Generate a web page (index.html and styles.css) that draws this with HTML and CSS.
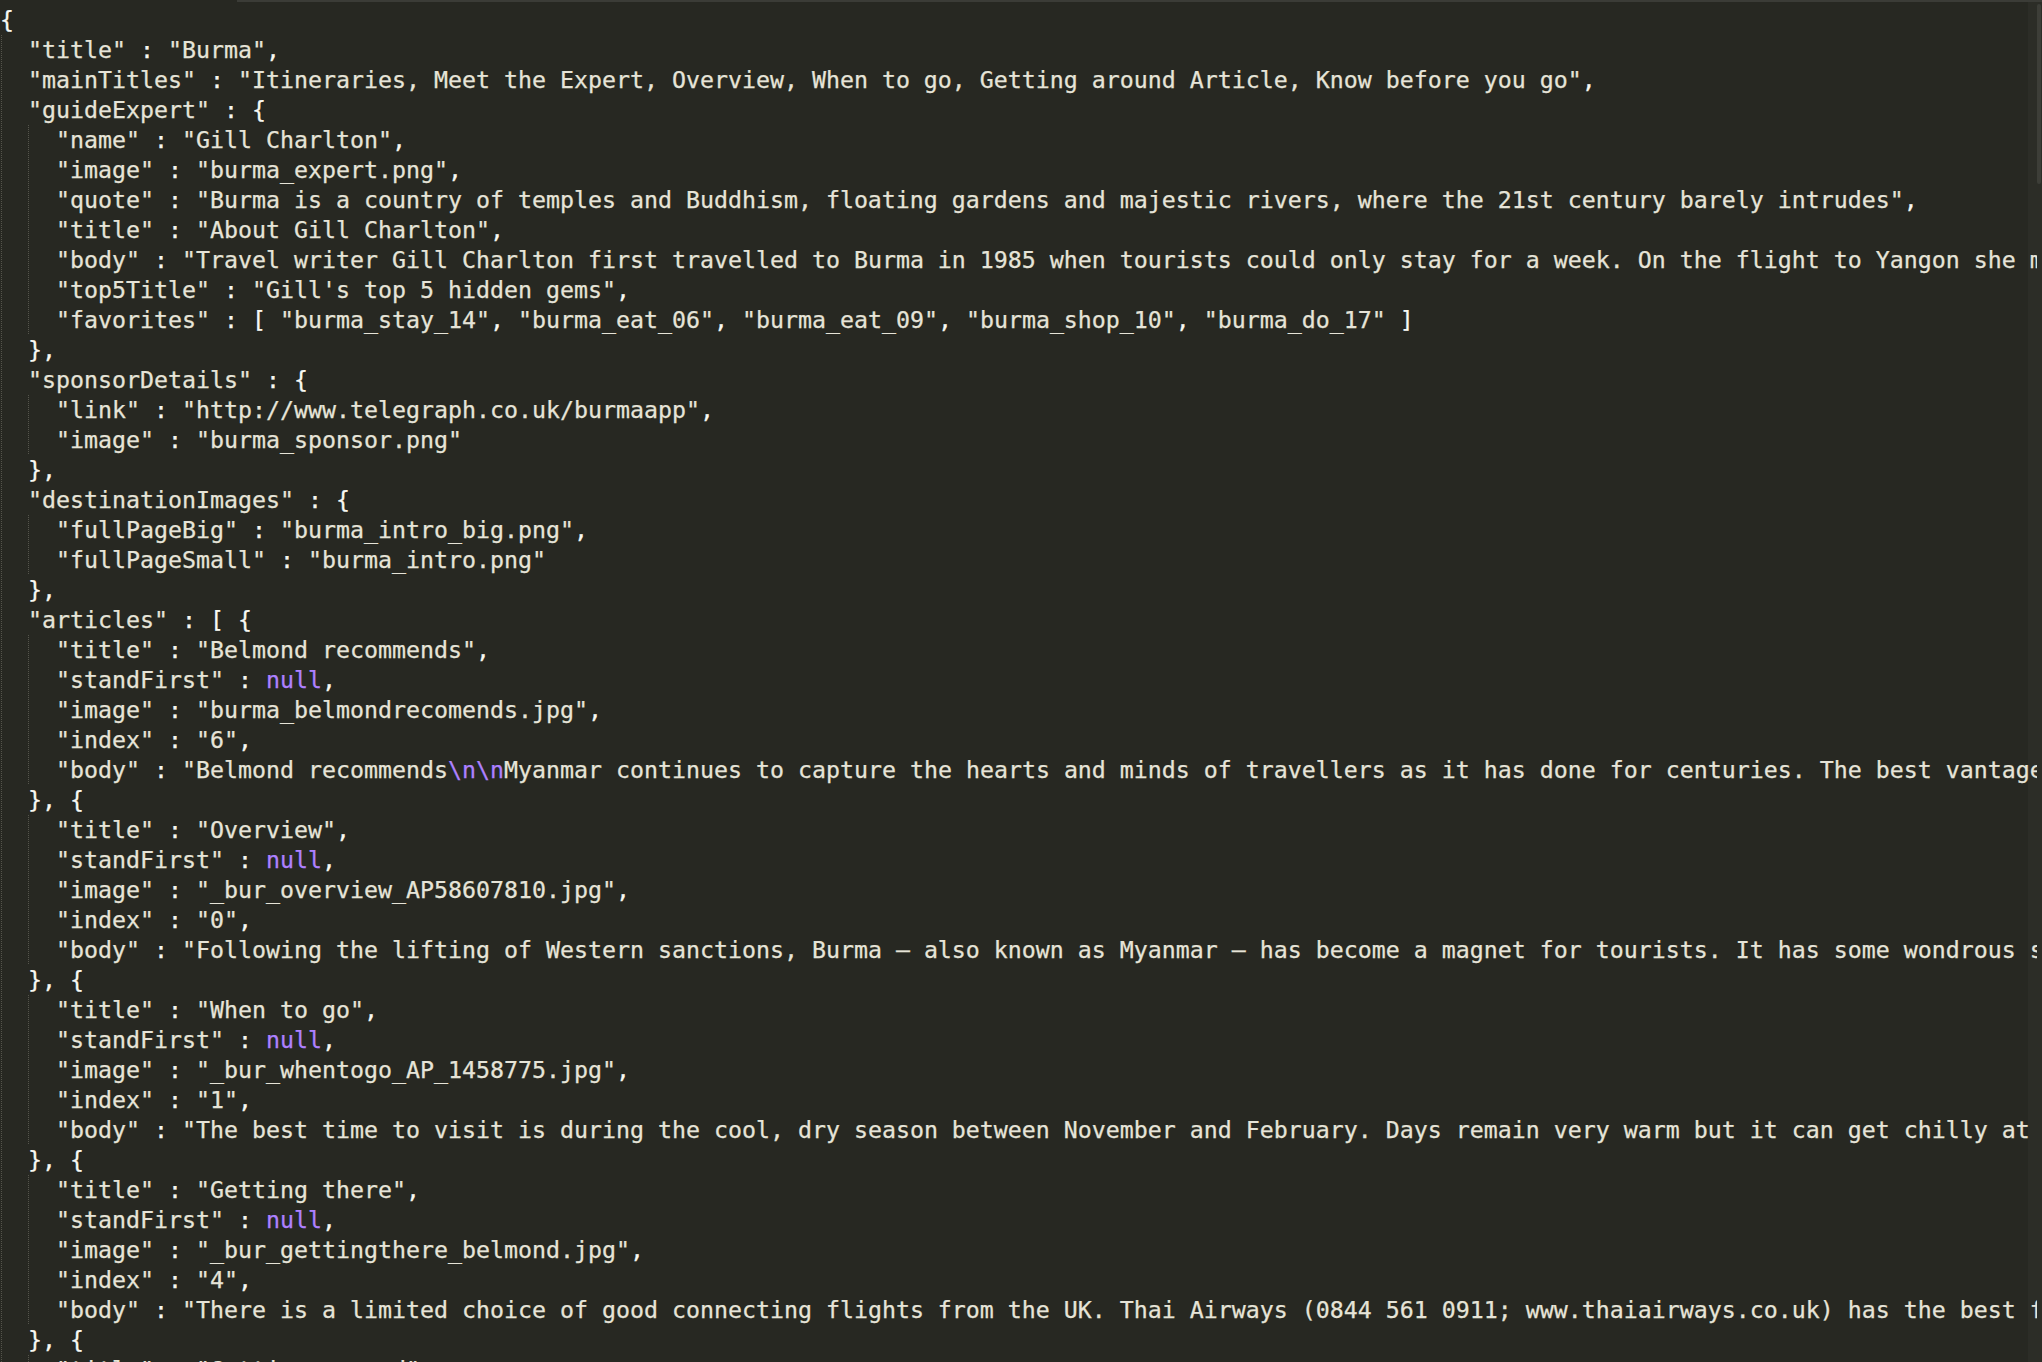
FILE: index.html
```html
<!DOCTYPE html>
<html>
<head>
<meta charset="utf-8">
<link rel="stylesheet" href="styles.css">
</head>
<body>
<div class="editor">
  <div class="tabedge"><div class="tabgap"></div><div class="tabrest"></div></div>
  <div class="code">
<div class="ln"><span class="p">{</span></div>
<div class="ln d1">  <span class="s">"title"</span><span class="p"> : </span><span class="s">"Burma"</span><span class="p">,</span></div>
<div class="ln d1">  <span class="s">"mainTitles"</span><span class="p"> : </span><span class="s">"Itineraries, Meet the Expert, Overview, When to go, Getting around Article, Know before you go"</span><span class="p">,</span></div>
<div class="ln d1">  <span class="s">"guideExpert"</span><span class="p"> : {</span></div>
<div class="ln d2">    <span class="s">"name"</span><span class="p"> : </span><span class="s">"Gill Charlton"</span><span class="p">,</span></div>
<div class="ln d2">    <span class="s">"image"</span><span class="p"> : </span><span class="s">"burma_expert.png"</span><span class="p">,</span></div>
<div class="ln d2">    <span class="s">"quote"</span><span class="p"> : </span><span class="s">"Burma is a country of temples and Buddhism, floating gardens and majestic rivers, where the 21st century barely intrudes"</span><span class="p">,</span></div>
<div class="ln d2">    <span class="s">"title"</span><span class="p"> : </span><span class="s">"About Gill Charlton"</span><span class="p">,</span></div>
<div class="ln d2">    <span class="s">"body"</span><span class="p"> : </span><span class="s">"Travel writer Gill Charlton first travelled to Burma in 1985 when tourists could only stay for a week. On the flight to Yangon she met a retired diplomat who changed everything"</span><span class="p">,</span></div>
<div class="ln d2">    <span class="s">"top5Title"</span><span class="p"> : </span><span class="s">"Gill's top 5 hidden gems"</span><span class="p">,</span></div>
<div class="ln d2">    <span class="s">"favorites"</span><span class="p"> : [ </span><span class="s">"burma_stay_14"</span><span class="p">, </span><span class="s">"burma_eat_06"</span><span class="p">, </span><span class="s">"burma_eat_09"</span><span class="p">, </span><span class="s">"burma_shop_10"</span><span class="p">, </span><span class="s">"burma_do_17"</span><span class="p"> ]</span></div>
<div class="ln d1">  <span class="p">},</span></div>
<div class="ln d1">  <span class="s">"sponsorDetails"</span><span class="p"> : {</span></div>
<div class="ln d2">    <span class="s">"link"</span><span class="p"> : </span><span class="s">"http://www.telegraph.co.uk/burmaapp"</span><span class="p">,</span></div>
<div class="ln d2">    <span class="s">"image"</span><span class="p"> : </span><span class="s">"burma_sponsor.png"</span></div>
<div class="ln d1">  <span class="p">},</span></div>
<div class="ln d1">  <span class="s">"destinationImages"</span><span class="p"> : {</span></div>
<div class="ln d2">    <span class="s">"fullPageBig"</span><span class="p"> : </span><span class="s">"burma_intro_big.png"</span><span class="p">,</span></div>
<div class="ln d2">    <span class="s">"fullPageSmall"</span><span class="p"> : </span><span class="s">"burma_intro.png"</span></div>
<div class="ln d1">  <span class="p">},</span></div>
<div class="ln d1">  <span class="s">"articles"</span><span class="p"> : [ {</span></div>
<div class="ln d2">    <span class="s">"title"</span><span class="p"> : </span><span class="s">"Belmond recommends"</span><span class="p">,</span></div>
<div class="ln d2">    <span class="s">"standFirst"</span><span class="p"> : </span><span class="c">null</span><span class="p">,</span></div>
<div class="ln d2">    <span class="s">"image"</span><span class="p"> : </span><span class="s">"burma_belmondrecomends.jpg"</span><span class="p">,</span></div>
<div class="ln d2">    <span class="s">"index"</span><span class="p"> : </span><span class="s">"6"</span><span class="p">,</span></div>
<div class="ln d2">    <span class="s">"body"</span><span class="p"> : </span><span class="s">"Belmond recommends</span><span class="c">\n\n</span><span class="s">Myanmar continues to capture the hearts and minds of travellers as it has done for centuries. The best vantage point is from the river"</span><span class="p">,</span></div>
<div class="ln d1">  <span class="p">}, {</span></div>
<div class="ln d2">    <span class="s">"title"</span><span class="p"> : </span><span class="s">"Overview"</span><span class="p">,</span></div>
<div class="ln d2">    <span class="s">"standFirst"</span><span class="p"> : </span><span class="c">null</span><span class="p">,</span></div>
<div class="ln d2">    <span class="s">"image"</span><span class="p"> : </span><span class="s">"_bur_overview_AP58607810.jpg"</span><span class="p">,</span></div>
<div class="ln d2">    <span class="s">"index"</span><span class="p"> : </span><span class="s">"0"</span><span class="p">,</span></div>
<div class="ln d2">    <span class="s">"body"</span><span class="p"> : </span><span class="s">"Following the lifting of Western sanctions, Burma – also known as Myanmar – has become a magnet for tourists. It has some wondrous sights"</span><span class="p">,</span></div>
<div class="ln d1">  <span class="p">}, {</span></div>
<div class="ln d2">    <span class="s">"title"</span><span class="p"> : </span><span class="s">"When to go"</span><span class="p">,</span></div>
<div class="ln d2">    <span class="s">"standFirst"</span><span class="p"> : </span><span class="c">null</span><span class="p">,</span></div>
<div class="ln d2">    <span class="s">"image"</span><span class="p"> : </span><span class="s">"_bur_whentogo_AP_1458775.jpg"</span><span class="p">,</span></div>
<div class="ln d2">    <span class="s">"index"</span><span class="p"> : </span><span class="s">"1"</span><span class="p">,</span></div>
<div class="ln d2">    <span class="s">"body"</span><span class="p"> : </span><span class="s">"The best time to visit is during the cool, dry season between November and February. Days remain very warm but it can get chilly at night"</span><span class="p">,</span></div>
<div class="ln d1">  <span class="p">}, {</span></div>
<div class="ln d2">    <span class="s">"title"</span><span class="p"> : </span><span class="s">"Getting there"</span><span class="p">,</span></div>
<div class="ln d2">    <span class="s">"standFirst"</span><span class="p"> : </span><span class="c">null</span><span class="p">,</span></div>
<div class="ln d2">    <span class="s">"image"</span><span class="p"> : </span><span class="s">"_bur_gettingthere_belmond.jpg"</span><span class="p">,</span></div>
<div class="ln d2">    <span class="s">"index"</span><span class="p"> : </span><span class="s">"4"</span><span class="p">,</span></div>
<div class="ln d2">    <span class="s">"body"</span><span class="p"> : </span><span class="s">"There is a limited choice of good connecting flights from the UK. Thai Airways (0844 561 0911; www.thaiairways.co.uk) has the best fares"</span><span class="p">,</span></div>
<div class="ln d1">  <span class="p">}, {</span></div>
<div class="ln d2">    <span class="s">"title"</span><span class="p"> : </span><span class="s">"Getting around"</span><span class="p">,</span></div>
  </div>
  <div class="scroll"><div class="thumb"></div></div>
</div>
</body>
</html>
```
FILE: styles.css
```css
html, body {
  margin: 0;
  padding: 0;
  background: #272822;
  overflow: hidden;
}

.editor {
  position: relative;
  width: 2042px;
  height: 1362px;
  overflow: hidden;
  background: #272822;
}

.tabedge {
  display: flex;
  height: 2px;
}

.tabgap {
  width: 237px;
  background: #272822;
}

.tabrest {
  flex: 1;
  background: #3b3c37;
}

.code {
  width: 2037px;
  overflow: hidden;
  padding-top: 3px;
  font-family: "DejaVu Sans Mono", monospace;
  font-size: 23.25px;
  line-height: 30px;
  color: #e6e4d8;
  -webkit-text-stroke: 0.25px currentColor;
}

.ln {
  height: 30px;
  white-space: pre;
}

.d1 {
  background-image: repeating-linear-gradient(to bottom, #55554c 0 1px, transparent 1px 2px);
  background-size: 1px 100%;
  background-repeat: no-repeat;
  background-position: 1px 0;
}

.d2 {
  background-image:
    repeating-linear-gradient(to bottom, #55554c 0 1px, transparent 1px 2px),
    repeating-linear-gradient(to bottom, #55554c 0 1px, transparent 1px 2px);
  background-size: 1px 100%, 1px 100%;
  background-repeat: no-repeat, no-repeat;
  background-position: 1px 0, 28px 0;
}

.s { color: #e6e4d8; }
.p { color: #f8f8f2; }
.c { color: #ae81ff; }

.scroll {
  position: absolute;
  top: 2px;
  right: 0;
  width: 14px;
  bottom: 0;
  background: rgba(255, 255, 255, 0.025);
}

.thumb {
  position: absolute;
  top: 2px;
  right: 1px;
  width: 4px;
  height: 180px;
  border-radius: 2px;
  background: #3d3e38;
}
```
